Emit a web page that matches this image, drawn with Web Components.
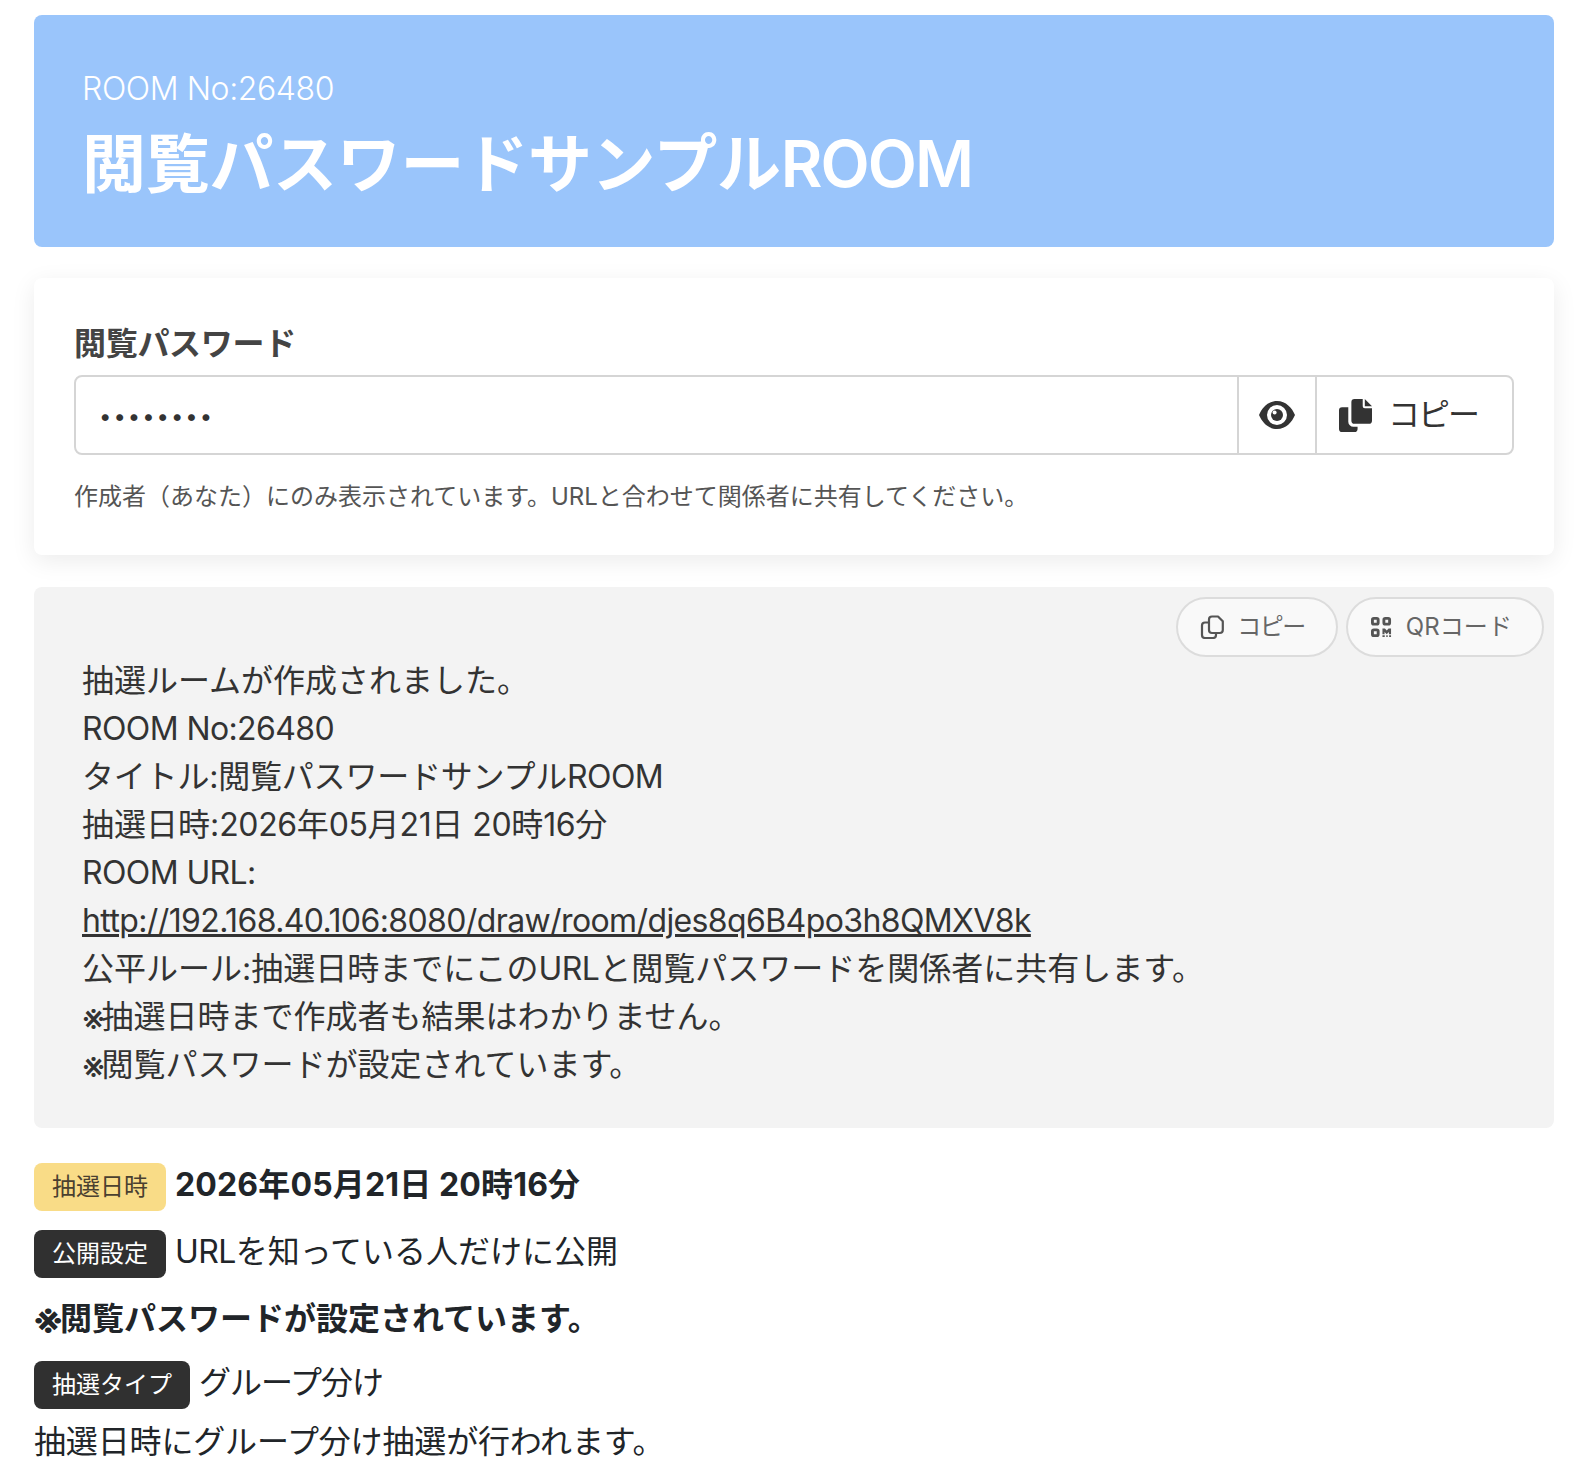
<!DOCTYPE html>
<html lang="ja">
<head>
<meta charset="utf-8">
<title>ROOM</title>
<style>
  html, body { margin: 0; background: #fff; }
  body {
    font-family: Inter, "Noto Sans CJK JP", sans-serif;
    color: #212529;
    font-size: 32px;
    line-height: 48px;
  }
  /* latin runs sit tighter than the kanji around them */
  .l { letter-spacing: -.61px; }
  .d { letter-spacing: -.4px; }
  .k { letter-spacing: -1px; }
  .t { letter-spacing: -.2px; }
  /* the reference mark is bigger and hangs lower than this font's */
  .m { font-size: 36px; line-height: 0; vertical-align: -3px; letter-spacing: -3.5px; }
  .mb { font-size: 40px; line-height: 0; vertical-align: -4px; letter-spacing: -4.5px; margin-left: -2px; }
</style>
</head>
<body>
<room-page>
  <room-hero no="26480"><span style="letter-spacing:-.3px">閲覧パスワードサンプル</span><span style="letter-spacing:-2px">ROOM</span></room-hero>
  <password-card dots="••••••••"></password-card>
  <share-box>
    <div>抽選ルームが作成されました。</div>
    <div class="l">ROOM No:26480</div>
    <div><span class="t">タイトル:閲覧パスワードサンプル</span><span class="l">ROOM</span></div>
    <div>抽選日時:<span class="d">2026</span>年<span class="d">05</span>月<span class="d">21</span>日 <span class="d">20</span>時<span class="d">16</span>分</div>
    <div class="l">ROOM URL:</div>
    <div class="l" style="text-decoration:underline">http://192.168.40.106:8080/draw/room/djes8q6B4po3h8QMXV8k</div>
    <div>公平ルール:抽選日時までにこの<span class="l">URL</span>と閲覧パスワードを関係者に共有します。</div>
    <div><span class="m">※</span>抽選日時まで作成者も結果はわかりません。</div>
    <div><span class="m">※</span>閲覧パスワードが設定されています。</div>
  </share-box>
  <info-row tag="抽選日時" tone="yellow" strong style="margin-top:35px"><span style="letter-spacing:.15px">2026年05月21日 20時16分</span></info-row>
  <info-row tag="公開設定" style="margin-top:19px"><span class="l">URL</span>を知っている人だけに公開</info-row>
  <div style="font-weight:700;margin-top:17px"><span class="mb">※</span>閲覧パスワードが設定されています。</div>
  <info-row tag="抽選タイプ" style="margin-top:18px"><span class="k">グループ分け</span></info-row>
  <div style="margin-top:9px;letter-spacing:-.15px">抽選日時にグループ分け抽選が行われます。</div>
</room-page>

<script>
const ICONS = {
  eye: `<svg viewBox="0 0 36 28" width="36" height="28"><path fill="#333" fill-rule="evenodd" d="M18 0C9 0 3 7 0 14c3 7 9 14 18 14s15-7 18-14C33 7 27 0 18 0Zm0 4a10 10 0 1 1 0 20 10 10 0 0 1 0-20Z"/><circle cx="18" cy="14" r="6" fill="#333"/><circle cx="15.6" cy="11.6" r="2" fill="#fff"/></svg>`,
  copyFill: `<svg viewBox="0 0 32 32" width="33" height="33"><path fill="#333" d="M15 0h8v7a2 2 0 0 0 2 2h7v12a3 3 0 0 1-3 3H15a3 3 0 0 1-3-3V3a3 3 0 0 1 3-3Z"/><path fill="#333" d="M25 0l7 7h-7Z"/><path fill="#333" d="M3 8h6v14a5 5 0 0 0 5 5h4v2a3 3 0 0 1-3 3H3a3 3 0 0 1-3-3V11a3 3 0 0 1 3-3Z"/></svg>`,
  copyLine: `<svg viewBox="0 0 24 24" width="24" height="24" fill="none" stroke="#555" stroke-width="2.2" stroke-linejoin="round"><path d="M12 1.500h6l4.800 4.800V15a3 3 0 0 1-3 3H12a3 3 0 0 1-3-3V4.500a3 3 0 0 1 3-3Z"/><path d="M9 7.500H5a3 3 0 0 0-3 3V20a3 3 0 0 0 3 3h8a3 3 0 0 0 3-3v-2"/></svg>`,
  qr: `<svg viewBox="0 0 22 22" width="21" height="21" fill="none" stroke="#555" stroke-width="3"><rect x="1.500" y="1.500" width="6" height="6" rx="1.500"/><rect x="13.500" y="1.500" width="6" height="6" rx="1.500"/><rect x="1.500" y="13.500" width="6" height="6" rx="1.500"/><path stroke="none" fill="#555" d="M12 12h2.600l1.900 2.200 1.900-2.200H21v6h-2.200v-2.400l-2.300 2.400-2.300-2.400V18H12Zm0 7h2.400v2H12Zm4 0h1.500v2H16Zm3 0h2v2h-2Z"/></svg>`
};

class RoomPage extends HTMLElement {
  constructor() {
    super();
    this.attachShadow({ mode: 'open' }).innerHTML = `
      <style>
        :host { display: block; padding: 15px 28px 0 34px; }
      </style>
      <slot></slot>`;
  }
}

class RoomHero extends HTMLElement {
  constructor() {
    super();
    this.attachShadow({ mode: 'open' }).innerHTML = `
      <style>
        :host {
          display: block;
          background: #9ac5fb;
          color: #fff;
          border-radius: 8px;
          padding: 50px 48px 35px;
        }
        .no { line-height: 48px; font-weight: 300; letter-spacing: -.4px; }
        h1 { margin: 3px 0 0; font-size: 64px; line-height: 96px; font-weight: 600; }
      </style>
      <div class="no">ROOM No:${this.getAttribute('no')}</div>
      <h1><slot></slot></h1>`;
  }
}

class PasswordCard extends HTMLElement {
  constructor() {
    super();
    this.attachShadow({ mode: 'open' }).innerHTML = `
      <style>
        :host {
          display: block;
          margin-top: 31px;
          padding: 40px 40px 40px;
          background: #fff;
          border-radius: 8px;
          box-shadow: 0 6px 24px rgba(0,0,0,.08);
        }
        label { display: block; font-weight: 700; color: #444; line-height: 52px; margin-bottom: 5px; letter-spacing: -.3px; }
        .group {
          display: flex;
          height: 76px;
          border: 2px solid #d5d5d5;
          border-radius: 8px;
          color: #333;
        }
        .field { flex: 1; padding-left: 23px; font-size: 22px; letter-spacing: 2px; line-height: 78px; }
        .eye, .copy {
          display: flex;
          align-items: center;
          border-left: 2px solid #d5d5d5;
        }
        .eye { width: 76px; justify-content: center; }
        .copy { width: 197px; gap: 16px; padding-left: 22px; box-sizing: border-box; }
        .copy span { letter-spacing: -2px; }
        p { margin: 24px 0 0; font-size: 24px; line-height: 36px; color: #555; }
      </style>
      <label>閲覧パスワード</label>
      <div class="group">
        <div class="field">${this.getAttribute('dots')}</div>
        <div class="eye">${ICONS.eye}</div>
        <div class="copy">${ICONS.copyFill}<span>コピー</span></div>
      </div>
      <p>作成者（あなた）にのみ表示されています。URLと合わせて関係者に共有してください。</p>`;
  }
}

class PillButton extends HTMLElement {
  constructor() {
    super();
    this.attachShadow({ mode: 'open' }).innerHTML = `
      <style>
        :host {
          display: inline-flex;
          align-items: center;
          gap: 14px;
          height: 60px;
          box-sizing: border-box;
          padding: 0 30px 0 23px;
          border: 2px solid #dcdcdc;
          border-radius: 30px;
          background: #f9f9f9;
          color: #666;
          font-size: 24px;
        }
        :host([icon="copyLine"]) { gap: 13px; padding: 0 31px 0 22px; letter-spacing: -1.500px; }
        :host([icon="qr"]) { letter-spacing: .1px; }
      </style>
      ${ICONS[this.getAttribute('icon')]}<slot></slot>`;
  }
}

class ShareBox extends HTMLElement {
  constructor() {
    super();
    this.attachShadow({ mode: 'open' }).innerHTML = `
      <style>
        :host {
          display: block;
          position: relative;
          margin-top: 32px;
          padding: 70px 48px 38px;
          height: 433px;
          background: #f3f3f3;
          border-radius: 8px;
          color: #333;
        }
        .actions { position: absolute; top: 10px; right: 10px; display: flex; gap: 8px; }
      </style>
      <div class="actions">
        <pill-button icon="copyLine">コピー</pill-button>
        <pill-button icon="qr">QRコード</pill-button>
      </div>
      <slot></slot>`;
  }
}

class InfoRow extends HTMLElement {
  constructor() {
    super();
    const tone = this.getAttribute('tone');
    this.attachShadow({ mode: 'open' }).innerHTML = `
      <style>
        :host { display: flex; align-items: center; gap: 9px; }
        .tag {
          padding: 0 18px;
          height: 48px;
          line-height: 48px;
          font-size: 24px;
          border-radius: 8px;
          background: ${tone === 'yellow' ? '#f9dc87' : '#303030'};
          color: ${tone === 'yellow' ? '#4a4030' : '#fff'};
        }
        .text { font-weight: ${this.hasAttribute('strong') ? 700 : 400}; margin-top: -5px; }
      </style>
      <span class="tag">${this.getAttribute('tag')}</span>
      <span class="text"><slot></slot></span>`;
  }
}

customElements.define('room-page', RoomPage);
customElements.define('room-hero', RoomHero);
customElements.define('password-card', PasswordCard);
customElements.define('pill-button', PillButton);
customElements.define('share-box', ShareBox);
customElements.define('info-row', InfoRow);
</script>
</body>
</html>
